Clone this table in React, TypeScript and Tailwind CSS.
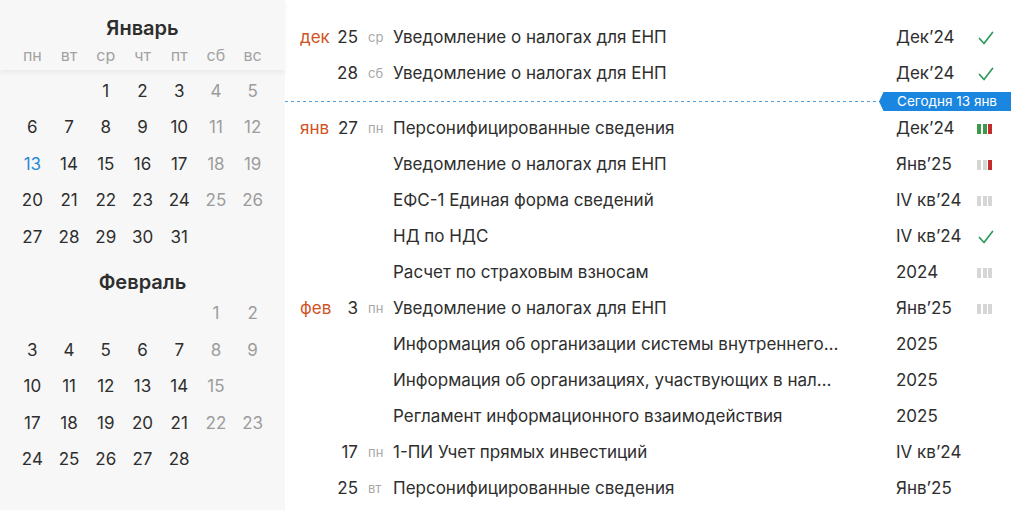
import React from 'react';

type Status = 'done' | 'none' | string[];

type Row = {
  month?: string;
  day?: number;
  wd?: string;
  title: string;
  period: string;
  status: Status;
};

const G = 'bg-[#3d9a4c]';
const R = 'bg-[#c42b2b]';
const N = 'bg-[#d6d6d6]';

const ROWS_BEFORE: Row[] = [
  { month: 'дек', day: 25, wd: 'ср', title: 'Уведомление о налогах для ЕНП', period: 'Дек’24', status: 'done' },
  { day: 28, wd: 'сб', title: 'Уведомление о налогах для ЕНП', period: 'Дек’24', status: 'done' },
];

const ROWS_AFTER: Row[] = [
  { month: 'янв', day: 27, wd: 'пн', title: 'Персонифицированные сведения', period: 'Дек’24', status: [G, G, R] },
  { title: 'Уведомление о налогах для ЕНП', period: 'Янв’25', status: [N, N, R] },
  { title: 'ЕФС-1 Единая форма сведений', period: 'IV кв’24', status: [N, N, N] },
  { title: 'НД по НДС', period: 'IV кв’24', status: 'done' },
  { title: 'Расчет по страховым взносам', period: '2024', status: [N, N, N] },
  { month: 'фев', day: 3, wd: 'пн', title: 'Уведомление о налогах для ЕНП', period: 'Янв’25', status: [N, N, N] },
  { title: 'Информация об организации системы внутреннего контроля', period: '2025', status: 'none' },
  { title: 'Информация об организациях, участвующих в налоговом мониторинге', period: '2025', status: 'none' },
  { title: 'Регламент информационного взаимодействия', period: '2025', status: 'none' },
  { day: 17, wd: 'пн', title: '1-ПИ Учет прямых инвестиций', period: 'IV кв’24', status: 'none' },
  { day: 25, wd: 'вт', title: 'Персонифицированные сведения', period: 'Янв’25', status: 'none' },
];

const WEEKDAYS = ['пн', 'вт', 'ср', 'чт', 'пт', 'сб', 'вс'];

function Check() {
  return (
    <svg width="16" height="15" viewBox="0 0 16 15" fill="none">
      <path d="M1.5 7.5 L6 12.5 L14.5 1.5" stroke="#2f9a5c" strokeWidth="1.7" strokeLinecap="round" strokeLinejoin="round" />
    </svg>
  );
}

function StatusCell({ status }: { status: Status }) {
  if (status === 'done') return <Check />;
  if (status === 'none') return null;
  return (
    <div className="flex gap-[1.5px] ml-[-1px]">
      {status.map((c, i) => (
        <div key={i} className={`w-[4px] h-[10px] ${c}`} />
      ))}
    </div>
  );
}

function EventRow({ row }: { row: Row }) {
  return (
    <div className="flex items-center h-[36px] pl-[15px]">
      <div className="w-[36px] shrink-0 text-[#d0531f]">{row.month}</div>
      <div className="w-[22px] shrink-0 text-right">{row.day}</div>
      <div className="w-[35px] shrink-0 pl-[10px] text-[13px] text-[#a8a8a8]">{row.wd}</div>
      <div className="flex-1 min-w-0 truncate pr-[55px]">{row.title}</div>
      <div className="w-[82px] shrink-0">{row.period}</div>
      <div className="w-[33px] shrink-0 flex items-center">
        <StatusCell status={row.status} />
      </div>
    </div>
  );
}

function Month({ name, offset, days, hidden }: { name: string; offset: number; days: number; hidden?: number[] }) {
  const cells: (number | null)[] = [];
  for (let i = 0; i < offset; i++) cells.push(null);
  for (let d = 1; d <= days; d++) cells.push(hidden && hidden.includes(d) ? null : d);
  return (
    <div className="grid grid-cols-7 px-[14px]">
      {cells.map((d, i) => {
        const col = i % 7;
        const weekend = col >= 5;
        const today = name === 'Январь' && d === 13;
        return (
          <div
            key={i}
            className={`h-[36.5px] flex items-center justify-center ${today ? 'text-[#2a89d4]' : weekend ? 'text-[#9c9c9c]' : 'text-[#2e2e2e]'}`}
          >
            {d}
          </div>
        );
      })}
    </div>
  );
}

export default function App() {
  return (
    <div className="flex w-[1011px] h-[510px] overflow-hidden bg-white text-[17px] text-[#2e2e2e] font-['Inter',sans-serif]">
      <div className="w-[285px] shrink-0 bg-[#f7f7f7]">
        <div className="pt-[16px] shadow-[0_3px_4px_rgba(0,0,0,0.05)] pb-[3px]">
          <div className="text-center text-[20px] font-semibold leading-[24px]">Январь</div>
          <div className="grid grid-cols-7 px-[14px] mt-[3px] text-[16px] text-[#a2a2a2] leading-[24px]">
            {WEEKDAYS.map(w => (
              <div key={w} className="text-center">{w}</div>
            ))}
          </div>
        </div>
        <div className="pt-[3px]">
          <Month name="Январь" offset={2} days={31} />
        </div>
        <div className="text-center text-[20px] font-semibold leading-[24px] pt-[14px] pb-[2px]">Февраль</div>
        <Month name="Февраль" offset={5} days={28} hidden={[16]} />
      </div>

      <div className="flex-1 min-w-0 pt-[20px]">
        {ROWS_BEFORE.map((r, i) => (
          <EventRow key={i} row={r} />
        ))}
        <div className="relative h-[19px] flex items-center">
          <div className="flex-1 h-px mr-[130px] bg-[repeating-linear-gradient(90deg,#4f9ddb_0_3px,transparent_3px_6px)]" />
          <div className="absolute right-0 top-[0px] h-[19px] flex items-center">
            <svg width="8" height="19" viewBox="0 0 8 19" className="block">
              <path d="M8 0 L4.5 0 L0 9.5 L4.5 19 L8 19 Z" fill="#1a86e0" />
            </svg>
            <div className="h-[19px] bg-[#1a86e0] text-white text-[13.5px] leading-[19px] pl-[10px] pr-[14px]">
              Сегодня 13 янв
            </div>
          </div>
        </div>
        {ROWS_AFTER.map((r, i) => (
          <EventRow key={i} row={r} />
        ))}
      </div>
    </div>
  );
}
